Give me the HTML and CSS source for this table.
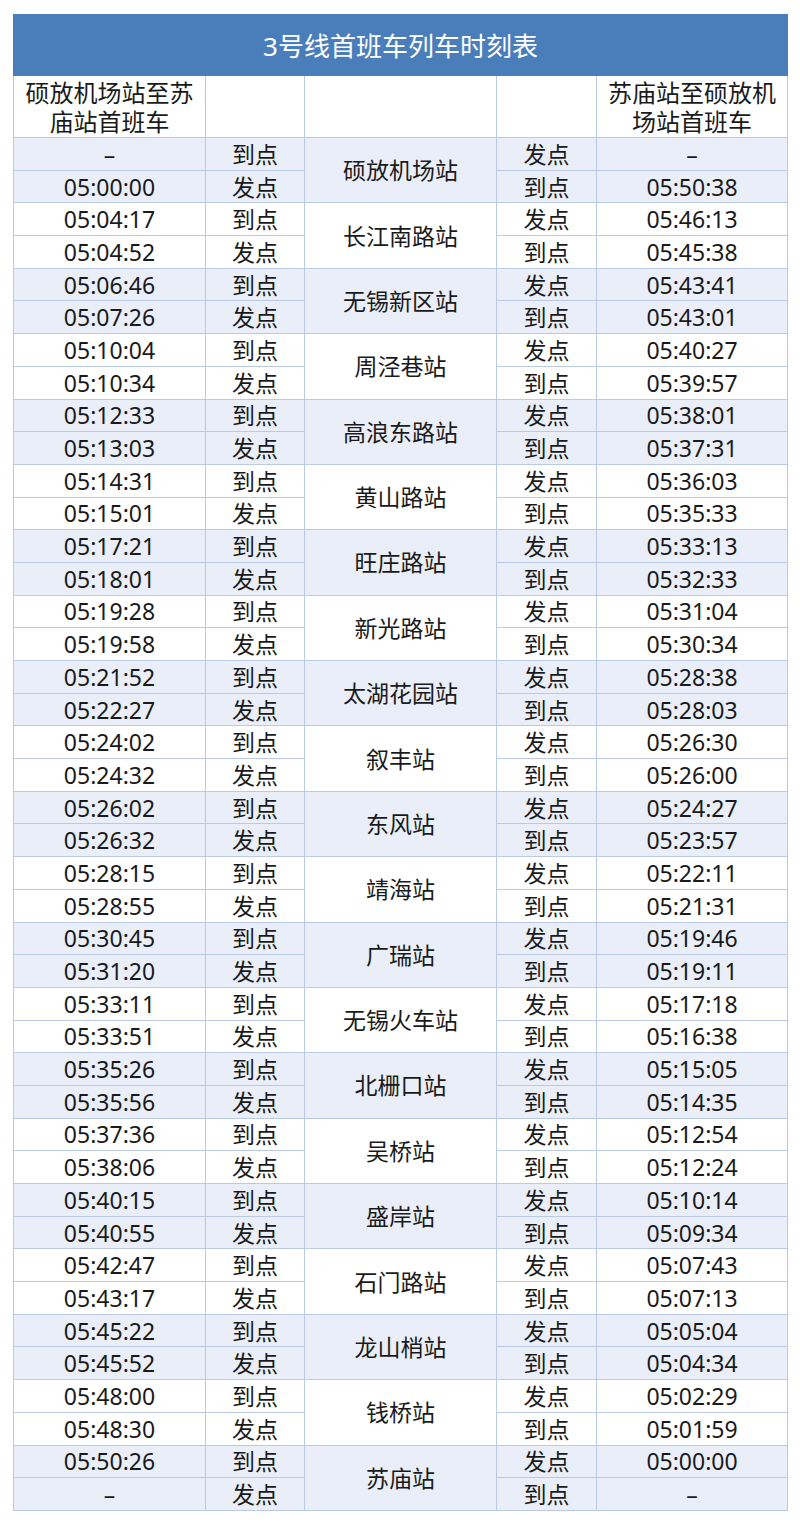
FILE: index.html
```html
<!DOCTYPE html>
<html lang="zh-CN">
<head>
<meta charset="utf-8">
<title>3号线首班车列车时刻表</title>
<link rel="stylesheet" href="styles.css">
</head>
<body>
<div class="wrap">
<table class="tt">
<colgroup><col class="c1"><col class="c2"><col class="c3"><col class="c4"><col class="c5"></colgroup>
<thead>
<tr class="title"><th colspan="5">3号线首班车列车时刻表</th></tr>
<tr class="head"><th>硕放机场站至苏庙站首班车</th><th></th><th></th><th></th><th>苏庙站至硕放机场站首班车</th></tr>
</thead>
<tbody class="band"><tr><td>–</td><td>到点</td><td rowspan="2" class="st">硕放机场站</td><td>发点</td><td>–</td></tr><tr><td>05:00:00</td><td>发点</td><td>到点</td><td>05:50:38</td></tr></tbody>
<tbody><tr><td>05:04:17</td><td>到点</td><td rowspan="2" class="st">长江南路站</td><td>发点</td><td>05:46:13</td></tr><tr><td>05:04:52</td><td>发点</td><td>到点</td><td>05:45:38</td></tr></tbody>
<tbody class="band"><tr><td>05:06:46</td><td>到点</td><td rowspan="2" class="st">无锡新区站</td><td>发点</td><td>05:43:41</td></tr><tr><td>05:07:26</td><td>发点</td><td>到点</td><td>05:43:01</td></tr></tbody>
<tbody><tr><td>05:10:04</td><td>到点</td><td rowspan="2" class="st">周泾巷站</td><td>发点</td><td>05:40:27</td></tr><tr><td>05:10:34</td><td>发点</td><td>到点</td><td>05:39:57</td></tr></tbody>
<tbody class="band"><tr><td>05:12:33</td><td>到点</td><td rowspan="2" class="st">高浪东路站</td><td>发点</td><td>05:38:01</td></tr><tr><td>05:13:03</td><td>发点</td><td>到点</td><td>05:37:31</td></tr></tbody>
<tbody><tr><td>05:14:31</td><td>到点</td><td rowspan="2" class="st">黄山路站</td><td>发点</td><td>05:36:03</td></tr><tr><td>05:15:01</td><td>发点</td><td>到点</td><td>05:35:33</td></tr></tbody>
<tbody class="band"><tr><td>05:17:21</td><td>到点</td><td rowspan="2" class="st">旺庄路站</td><td>发点</td><td>05:33:13</td></tr><tr><td>05:18:01</td><td>发点</td><td>到点</td><td>05:32:33</td></tr></tbody>
<tbody><tr><td>05:19:28</td><td>到点</td><td rowspan="2" class="st">新光路站</td><td>发点</td><td>05:31:04</td></tr><tr><td>05:19:58</td><td>发点</td><td>到点</td><td>05:30:34</td></tr></tbody>
<tbody class="band"><tr><td>05:21:52</td><td>到点</td><td rowspan="2" class="st">太湖花园站</td><td>发点</td><td>05:28:38</td></tr><tr><td>05:22:27</td><td>发点</td><td>到点</td><td>05:28:03</td></tr></tbody>
<tbody><tr><td>05:24:02</td><td>到点</td><td rowspan="2" class="st">叙丰站</td><td>发点</td><td>05:26:30</td></tr><tr><td>05:24:32</td><td>发点</td><td>到点</td><td>05:26:00</td></tr></tbody>
<tbody class="band"><tr><td>05:26:02</td><td>到点</td><td rowspan="2" class="st">东风站</td><td>发点</td><td>05:24:27</td></tr><tr><td>05:26:32</td><td>发点</td><td>到点</td><td>05:23:57</td></tr></tbody>
<tbody><tr><td>05:28:15</td><td>到点</td><td rowspan="2" class="st">靖海站</td><td>发点</td><td>05:22:11</td></tr><tr><td>05:28:55</td><td>发点</td><td>到点</td><td>05:21:31</td></tr></tbody>
<tbody class="band"><tr><td>05:30:45</td><td>到点</td><td rowspan="2" class="st">广瑞站</td><td>发点</td><td>05:19:46</td></tr><tr><td>05:31:20</td><td>发点</td><td>到点</td><td>05:19:11</td></tr></tbody>
<tbody><tr><td>05:33:11</td><td>到点</td><td rowspan="2" class="st">无锡火车站</td><td>发点</td><td>05:17:18</td></tr><tr><td>05:33:51</td><td>发点</td><td>到点</td><td>05:16:38</td></tr></tbody>
<tbody class="band"><tr><td>05:35:26</td><td>到点</td><td rowspan="2" class="st">北栅口站</td><td>发点</td><td>05:15:05</td></tr><tr><td>05:35:56</td><td>发点</td><td>到点</td><td>05:14:35</td></tr></tbody>
<tbody><tr><td>05:37:36</td><td>到点</td><td rowspan="2" class="st">吴桥站</td><td>发点</td><td>05:12:54</td></tr><tr><td>05:38:06</td><td>发点</td><td>到点</td><td>05:12:24</td></tr></tbody>
<tbody class="band"><tr><td>05:40:15</td><td>到点</td><td rowspan="2" class="st">盛岸站</td><td>发点</td><td>05:10:14</td></tr><tr><td>05:40:55</td><td>发点</td><td>到点</td><td>05:09:34</td></tr></tbody>
<tbody><tr><td>05:42:47</td><td>到点</td><td rowspan="2" class="st">石门路站</td><td>发点</td><td>05:07:43</td></tr><tr><td>05:43:17</td><td>发点</td><td>到点</td><td>05:07:13</td></tr></tbody>
<tbody class="band"><tr><td>05:45:22</td><td>到点</td><td rowspan="2" class="st">龙山梢站</td><td>发点</td><td>05:05:04</td></tr><tr><td>05:45:52</td><td>发点</td><td>到点</td><td>05:04:34</td></tr></tbody>
<tbody><tr><td>05:48:00</td><td>到点</td><td rowspan="2" class="st">钱桥站</td><td>发点</td><td>05:02:29</td></tr><tr><td>05:48:30</td><td>发点</td><td>到点</td><td>05:01:59</td></tr></tbody>
<tbody class="band"><tr><td>05:50:26</td><td>到点</td><td rowspan="2" class="st">苏庙站</td><td>发点</td><td>05:00:00</td></tr><tr><td>–</td><td>发点</td><td>到点</td><td class="last">–</td></tr></tbody>
</table>
</div>
</body>
</html>
```

FILE: styles.css
```css
html, body {
  margin: 0;
  padding: 0;
  background: #ffffff;
}
.wrap {
  padding: 14px 0 0 13px;
}
.tt {
  width: 774px;
  border-collapse: collapse;
  table-layout: fixed;
  font-family: "Noto Sans", "Noto Sans CJK SC", sans-serif;
  color: #1a1a1a;
  border: 1px solid #8fa9d6;
}
.c1 { width: 192px; }
.c2 { width: 99px; }
.c3 { width: 192px; }
.c4 { width: 100px; }
.c5 { width: 191px; }
.title th {
  background: #4a7ebb;
  color: #ffffff;
  font-weight: normal;
  font-size: 26px;
  height: 60px;
  padding: 0;
  border: 1px solid #4a7ebb;
}
.head th {
  font-weight: normal;
  font-size: 24px;
  line-height: 29px;
  height: 61px;
  padding: 0 4px;
  border: 1px solid #b9c9e6;
  background: #ffffff;
}
.tt td {
  height: 31.7px;
  padding: 0;
  font-size: 23px;
  line-height: 28px;
  text-align: center;
  border: 1px solid #b9c9e6;
  background: #ffffff;
  white-space: nowrap;
}
.band td {
  background: #e9eef8;
}
.tt td.last {
  border-left: 1px solid #7f9ccf;
  border-top: 1px solid #8fa9d6;
}
```
